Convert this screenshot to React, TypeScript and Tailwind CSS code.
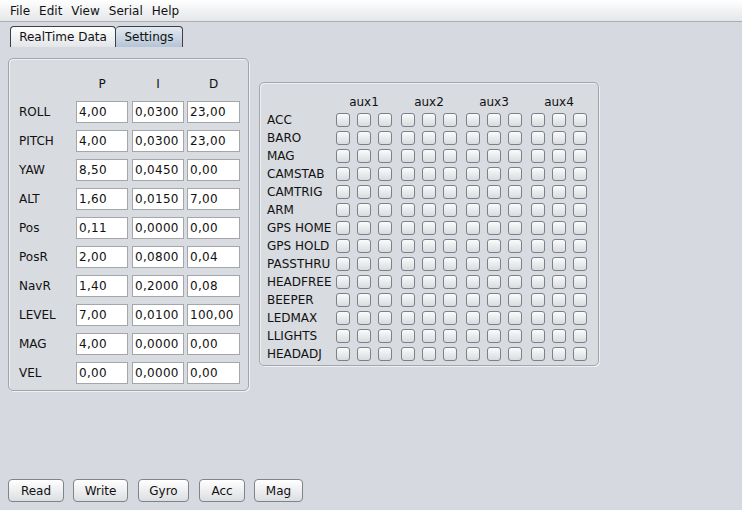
const FONT = "font-['DejaVu_Sans',sans-serif]";

const PID_ROWS: [string, string, string, string][] = [
  ["ROLL", "4,00", "0,0300", "23,00"],
  ["PITCH", "4,00", "0,0300", "23,00"],
  ["YAW", "8,50", "0,0450", "0,00"],
  ["ALT", "1,60", "0,0150", "7,00"],
  ["Pos", "0,11", "0,0000", "0,00"],
  ["PosR", "2,00", "0,0800", "0,04"],
  ["NavR", "1,40", "0,2000", "0,08"],
  ["LEVEL", "7,00", "0,0100", "100,00"],
  ["MAG", "4,00", "0,0000", "0,00"],
  ["VEL", "0,00", "0,0000", "0,00"],
];

const BOXES = ["ACC", "BARO", "MAG", "CAMSTAB", "CAMTRIG", "ARM", "GPS HOME", "GPS HOLD", "PASSTHRU", "HEADFREE", "BEEPER", "LEDMAX", "LLIGHTS", "HEADADJ"];
const AUX = ["aux1", "aux2", "aux3", "aux4"];

function Field({ value, w }: { value: string; w: string }) {
  return (
    <div className={`${w} h-[22px] bg-white border border-[#a3a6ab] pl-[2px] flex items-center text-[12px] tracking-[0.3px] text-[#111]`}>
      {value}
    </div>
  );
}

function Check() {
  return (
    <div className="w-[14px] h-[14px] rounded-[3px] border border-[#7c8088] bg-gradient-to-b from-[#fbfbfb] to-[#d9dbdf]" />
  );
}

function Panel({ className, children }: { className: string; children: React.ReactNode }) {
  return (
    <div className={`rounded-[5px] border border-[#a2a5ab] shadow-[inset_1px_1px_0_#eef0f3,1px_1px_0_#eef0f3] bg-[#d8dbe0] ${className}`}>
      {children}
    </div>
  );
}

export default function App() {
  return (
    <div className={`${FONT} w-[742px] h-[510px] bg-[#d6d9df] flex flex-col text-[#111] overflow-hidden`}>
      <div className="h-[22px] shrink-0 flex items-center gap-[9px] pl-[10px] text-[12px] bg-gradient-to-b from-white to-[#e4e6e9] border-b border-[#a9acb2]">
        {["File", "Edit", "View", "Serial", "Help"].map(m => <span key={m}>{m}</span>)}
      </div>

      <div className="flex pl-[10px] mt-[4px] h-[21px] text-[12px]">
        <div className="w-[106px] h-[21px] flex items-center justify-center rounded-t-[4px] border border-b-0 border-[#3b3f46] bg-gradient-to-b from-white to-[#e3e5e8]">
          RealTime Data
        </div>
        <div className="w-[67px] h-[21px] flex items-center justify-center rounded-t-[4px] border border-b-0 border-l-0 border-[#3b3f46] bg-gradient-to-b from-[#e4eaf1] to-[#b4c4d5]">
          Settings
        </div>
      </div>

      <div className="flex items-start pl-[8px] mt-[11px] text-[12px]">
        <Panel className="w-[241px] h-[333px] pt-[18px] pl-[10px]">
          <div className="flex h-[14px] mb-[10px] items-center">
            <div className="w-[57px]" />
            <div className="w-[52px] text-center">P</div>
            <div className="w-[52px] ml-[4px] text-center">I</div>
            <div className="w-[53px] ml-[3px] text-center">D</div>
          </div>
          <div className="flex flex-col gap-[7px]">
            {PID_ROWS.map(([name, p, i, d]) => (
              <div key={name} className="flex items-center">
                <div className="w-[57px]">{name}</div>
                <Field value={p} w="w-[52px]" />
                <div className="ml-[4px]"><Field value={i} w="w-[52px]" /></div>
                <div className="ml-[3px]"><Field value={d} w="w-[53px]" /></div>
              </div>
            ))}
          </div>
        </Panel>

        <Panel className="w-[340px] h-[284px] ml-[10px] mt-[24px] pt-[12px] pl-[7px]">
          <div className="flex h-[14px] mb-[4px] items-center">
            <div className="w-[69px]" />
            <div className="flex gap-[9px]">
              {AUX.map(a => <div key={a} className="w-[56px] text-center">{a}</div>)}
            </div>
          </div>
          <div className="flex flex-col gap-[4px]">
            {BOXES.map(b => (
              <div key={b} className="flex items-center h-[14px]">
                <div className="w-[69px] whitespace-nowrap">{b}</div>
                <div className="flex gap-[9px]">
                  {AUX.map(a => (
                    <div key={a} className="flex gap-[7px]">
                      <Check /><Check /><Check />
                    </div>
                  ))}
                </div>
              </div>
            ))}
          </div>
        </Panel>
      </div>

      <div className="mt-auto mb-[8px] pl-[8px] flex text-[12px]">
        {[["Read", "w-[56px]", ""], ["Write", "w-[55px]", "ml-[9px]"], ["Gyro", "w-[51px]", "ml-[10px]"], ["Acc", "w-[46px]", "ml-[10px]"], ["Mag", "w-[49px]", "ml-[9px]"]].map(([t, w, m]) => (
          <div key={t} className={`${w} ${m} h-[23px] flex items-center justify-center rounded-[4px] border border-[#7f838a] bg-gradient-to-b from-white to-[#dcdee2]`}>
            {t}
          </div>
        ))}
      </div>
    </div>
  );
}
